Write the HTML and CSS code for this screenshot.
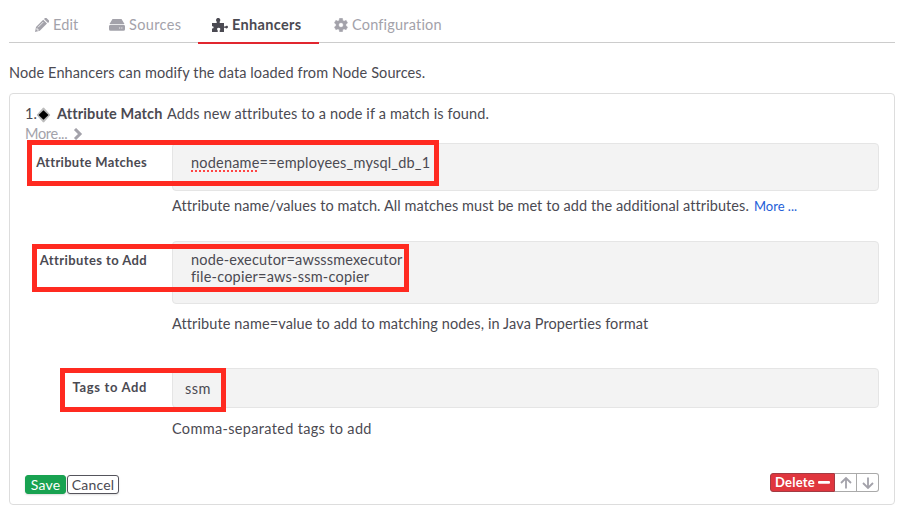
FILE: index.html
```html
<!DOCTYPE html>
<html lang="en">
<head>
<meta charset="utf-8">
<title>Node Enhancers</title>
<link rel="stylesheet" href="styles.css">
</head>
<body>
<nav class="tabs">
  <a class="tab tab-edit"><svg width="14" height="14" viewBox="0 0 14 14"><path d="M1 9 8.200 1.800 12 5.600 4.800 12.800 0 14ZM9 1l1-1h1.500L14 2.500V4l-1 1Z"/><path class="cut" d="m3 9.300 5.300-5.300M2 10v2h2"/></svg><span>Edit</span></a>
  <a class="tab tab-sources"><svg width="16" height="12" viewBox="0 0 16 12"><path d="M3.500 0h9L15.500 5H.5ZM1.500 5.800h13q1.500 0 1.500 1.500v3q0 1.500-1.500 1.500h-13Q0 11.800 0 10.300v-3q0-1.500 1.500-1.500Z"/><path class="cut" d="M10 9h1.200m1 0h1.200"/></svg><span>Sources</span></a>
  <a class="tab tab-enhancers active"><svg width="16" height="14" viewBox="0 0 16 14"><path d="M0 5h4.700V3.600C3.500 2.500 4 0 6.200 0s2.700 2.500 1.500 3.600V5H12v3.500h1.200C14 7.200 16 7.500 16 9s-2 1.900-2.800.7H12V14H7.700v-1.500c1.200-1 .8-2.700-1-2.700s-2.200 1.700-1 2.700V14H0v-3.500c2.200.4 2.200-2.700 0-2.200Z"/></svg><span>Enhancers</span></a>
  <a class="tab tab-config"><svg width="14" height="14" viewBox=".7 .3 12.600 12.600"><path fill-rule="evenodd" d="M5.700 0h2.600l.4 2 1 .6 1.900-.8 1.300 2.300-1.500 1.300v1.200l1.500 1.300-1.300 2.300-1.900-.7-1 .6-.4 2H5.700l-.4-2-1-.6-1.900.7L1.100 7.900l1.500-1.300V5.400L1.100 4.100l1.300-2.300 1.900.8 1-.6ZM7 3.900a2.100 2.100 0 1 0 0 4.200 2.100 2.100 0 0 0 0-4.200Z" stroke="currentColor" stroke-width=".4" transform="translate(0 .6)"/></svg><span>Configuration</span></a>
</nav>
<p class="intro">Node Enhancers can modify the data loaded from Node Sources.</p>
<section class="card">
  <header class="heading">
    <span>1.</span>
    <svg class="diamond" width="15" height="16" viewBox="0 0 15 16"><path fill="#bbb" stroke="#bbb" stroke-linejoin="round" d="m7.500.8 6.500 7.200-6.500 7.200L1 8Z"/><path fill="#000" d="m7.500 3.300 5 4.700-5 4.700L2.500 8Z"/></svg>
    <strong>Attribute Match</strong>
    <span class="summary">Adds new attributes to a node if a match is found.</span>
  </header>
  <div class="more"><span>More...</span><svg width="10" height="12" viewBox="0 0 10 12"><path d="m2 1 5 5-5 5"/></svg></div>
  <div class="row row-match">
    <label>Attribute Matches</label>
    <div class="control">
      <div class="field"><span class="value match-value"><span class="spell">nodename</span>==employees_mysql_db_1</span></div>
      <p class="help"><span class="help-match">Attribute name/values to match. All matches must be met to add the additional attributes.</span><a>More ...</a></p>
    </div>
    <i class="mark"></i>
  </div>
  <div class="row row-add">
    <label>Attributes to Add</label>
    <div class="control">
      <div class="field"><span class="value add-value">node-executor=awsssmexecutor</span><span class="value copier-value">file-copier=aws-ssm-copier</span></div>
      <p class="help"><span class="help-add">Attribute name=value to add to matching nodes, in Java Properties format</span></p>
    </div>
    <i class="mark"></i>
  </div>
  <div class="row row-tags">
    <label>Tags to Add</label>
    <div class="control">
      <div class="field"><span class="value">ssm</span></div>
      <p class="help"><span class="help-tags">Comma-separated tags to add</span></p>
    </div>
    <i class="mark"></i>
  </div>
  <footer class="actions">
    <div class="group"><button class="save">Save</button><button class="cancel">Cancel</button></div>
    <div class="group tools">
      <button class="delete"><span>Delete</span><svg width="12" height="3"><rect width="12" height="2.800" rx="1" fill="#fff"/></svg></button>
      <button class="move"><svg width="12" height="12" viewBox="0 0 12 12"><path d="M6 11.500V1M1 6l5-5 5 5"/></svg></button>
      <button class="move last"><svg width="12" height="12" viewBox="0 0 12 12"><path d="M6 .5V11M1 6l5 5 5-5"/></svg></button>
    </div>
  </footer>
</section>
</body>
</html>
```
FILE: styles.css
```css
* { box-sizing: border-box; }
body { margin: 0; padding: 0 10px 0 9px; background: #fff; color: #4b4a52; font: 14.5px/20px Lato, "Liberation Sans", sans-serif; letter-spacing: .11px; }
p { margin: 0; }
.tabs { display: flex; height: 43px; padding-top: 7px; border-bottom: 1px solid #ccc; }
.tab { display: flex; align-items: center; height: 37px; padding-bottom: 2px; gap: 4px; color: #a3a2aa; white-space: nowrap; }
.tab svg { fill: currentColor; flex: none; }
.tab .cut { fill: none; stroke: #fff; stroke-width: .8; }
.tab-edit { margin-left: 26px; width: 74px; }
.tab-sources { width: 89px; letter-spacing: .35px; }
.tab-enhancers { width: 121px; padding: 0 0 0 14px; letter-spacing: .35px; }
.tab-config { padding-left: 15px; letter-spacing: .2px; }
.active { color: #4b4a52; font-weight: bold; border-bottom: 2px solid #e1262f; }
.intro { height: 50px; padding-top: 20px; white-space: nowrap; }
.card { height: 412px; border: 1px solid #ddd; border-radius: 4px; padding: 10px 15px 0; display: flex; flex-direction: column; }
.heading { display: flex; height: 20px; white-space: nowrap; }
.heading > span:first-child { width: 11px; }
.diamond { margin: 3px 6px 0 0; }
.heading strong { width: 110px; }
.heading .summary { letter-spacing: .13px; }
.more { display: flex; align-items: center; gap: 6px; height: 19px; color: #a3a2aa; letter-spacing: -.3px; }
.more svg { fill: none; stroke: currentColor; stroke-width: 3; }
.row { display: flex; position: relative; }
.row label { width: 122px; margin-right: 25px; text-align: right; font-weight: bold; font-size: 13px; letter-spacing: .3px; white-space: nowrap; }
.control { width: 707px; }
.field { display: flex; flex-direction: column; background: #f3f3f3; border: 1px solid #e5e5e5; border-radius: 4px; padding-left: 18px; line-height: 17px; white-space: nowrap; }
.row-match { height: 98px; }
.row-match label { padding-top: 9px; }
.row-add label { padding-top: 9px; letter-spacing: .4px; }
.row-match .field { height: 48px; padding-top: 10px; }
.match-value { letter-spacing: .2px; }
.add-value { letter-spacing: .17px; }
.copier-value { letter-spacing: .22px; }
.help-match { letter-spacing: .08px; }
.help-tags { letter-spacing: .33px; }
.spell { text-decoration: underline dotted #f44; text-underline-offset: 2px; text-decoration-thickness: 2px; }
.row-add { height: 127px; }
.row-add .field { height: 63px; padding-top: 9px; }
.row-tags { height: 105px; }
.row-tags label { padding-top: 9px; letter-spacing: .65px; }
.row-tags .field { height: 40px; padding: 11px 0 0 12px; letter-spacing: .45px; }
.help { display: flex; align-items: center; padding-top: 4px; white-space: nowrap; }
.row-add .help { padding-top: 10px; }
.row-tags .help { padding-top: 11px; }
.help a { color: #2460d8; font-size: 13px; margin-left: 5px; padding-top: 1px; letter-spacing: 0; }
.mark { position: absolute; border: 5px solid #ff2a20; }
.row-match .mark { left: 2px; top: -3px; width: 412px; height: 46px; }
.row-add .mark { left: 7px; top: 3px; width: 377px; height: 48px; }
.row-tags .mark { left: 35px; top: 0; width: 166px; height: 44px; }
.actions { display: flex; justify-content: space-between; }
.group { display: flex; }
button { height: 19px; padding: 0; font: inherit; font-size: 14px; line-height: 17px; letter-spacing: .2px; color: #4b4a52; background: #fff; border: 1px solid #55545c; border-radius: 3px; }
.save { width: 41px; margin-right: 1px; background: #18a251; border-color: #18a251; color: #fff; }
.save, .cancel { box-shadow: 0 1px 2px #0002; }
.cancel { width: 52px; }
.actions .group:first-child { margin-top: 2px; }
.delete { display: flex; align-items: center; justify-content: center; gap: 3px; width: 65px; background: #e0363e; border-color: #a33b43; color: #fff; font-weight: bold; font-size: 13px; border-radius: 3px 0 0 3px; }
.move { display: flex; align-items: center; justify-content: center; width: 22px; border-color: #aaa; border-left: 0; border-radius: 0; }
.move svg { fill: none; stroke: #a3a2aa; stroke-width: 1.800; }
.last { border-radius: 0 3px 3px 0; }
```
